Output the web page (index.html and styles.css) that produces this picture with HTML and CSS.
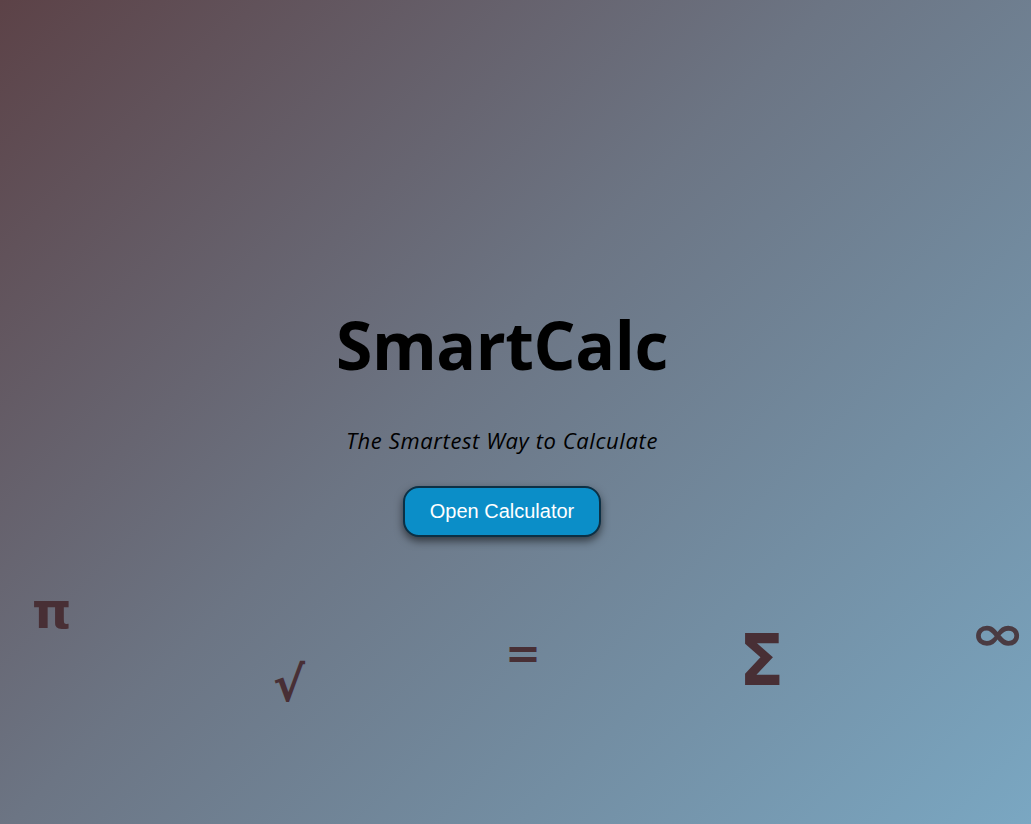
FILE: index.html
```html
<!DOCTYPE html>
<html lang="en">
<head>
<meta charset="utf-8">
<title>SmartCalc</title>
<link rel="stylesheet" href="styles.css">
</head>
<body>
<main class="hero">
  <h1 class="title">SmartCalc</h1>
  <p class="tagline">The Smartest Way to Calculate</p>
  <button class="open-btn" type="button">Open Calculator</button>
</main>
<div class="symbols" aria-hidden="true">
  <span class="sym sym-pi">π</span>
  <span class="sym sym-sqrt">√</span>
  <span class="sym sym-eq">=</span>
  <span class="sym sym-sigma">Σ</span>
  <span class="sym sym-inf">∞</span>
</div>
</body>
</html>
```

FILE: styles.css
```css
html, body {
  margin: 0;
  height: 100%;
}
body {
  position: relative;
  overflow: hidden;
  background: linear-gradient(135deg, #5c4247 0%, #6c7584 45%, #7aa7c2 100%);
  font-family: "Open Sans", "Noto Sans", sans-serif;
  color: #000;
}
.hero {
  display: flex;
  flex-direction: column;
  align-items: center;
  padding: 300px 27px 0 0;
}
.title {
  margin: 0;
  font-size: 66px;
  font-weight: 700;
  line-height: 88px;
  letter-spacing: -0.4px;
}
.tagline {
  margin: 37px 0 0;
  font-size: 22px;
  font-style: italic;
  line-height: 30px;
  letter-spacing: 0.6px;
}
.open-btn {
  margin-top: 31px;
  width: 198px;
  height: 51px;
  border: 2px solid #0c3045;
  border-radius: 16px;
  background: #0b8ec8;
  color: #fff;
  font-family: "Liberation Sans", Arial, sans-serif;
  font-size: 20px;
  box-shadow: 0 4px 8px rgba(0, 0, 0, 0.55);
  cursor: pointer;
}
.symbols {
  position: absolute;
  inset: 0;
  pointer-events: none;
}
.sym {
  position: absolute;
  color: #482f35;
  font-family: "DejaVu Sans", sans-serif;
  font-weight: 700;
  line-height: 1;
}
.sym-pi { left: 32px; top: 586px; font-size: 50px; }
.sym-sqrt { left: 273px; top: 660px; font-size: 48px; }
.sym-eq { left: 505px; top: 632px; font-size: 43px; }
.sym-sigma { left: 739px; top: 624px; font-size: 72px; transform: scaleX(0.92); transform-origin: left center; }
.sym-inf { left: 970px; top: 609px; font-size: 48px; transform: scaleX(1.38); transform-origin: left center; color: #4a3b42; }
```
